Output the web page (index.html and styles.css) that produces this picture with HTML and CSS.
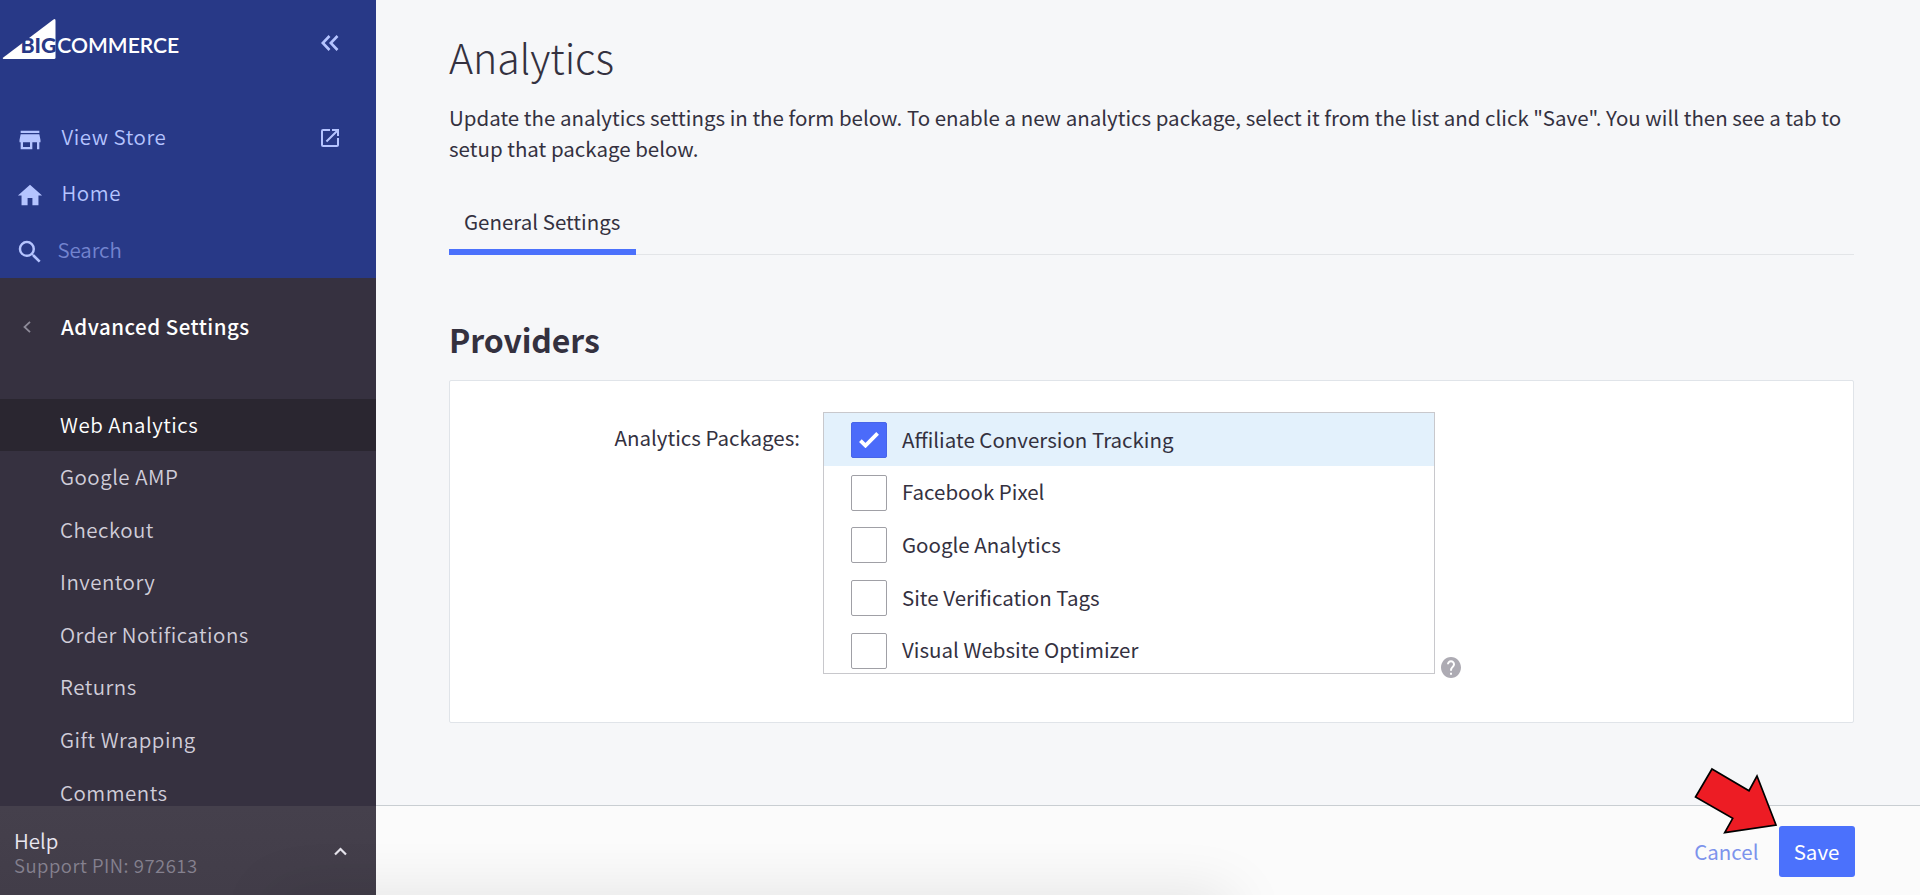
FILE: index.html
```html
<!DOCTYPE html>
<html lang="en">
<head>
<meta charset="utf-8">
<title>Analytics</title>
<link rel="stylesheet" href="styles.css">
</head>
<body>
<div class="app">
  <aside class="sidebar">
    <div class="top">
      <div class="brand">
        <svg class="logo" width="180" height="44" viewBox="0 0 180 44">
          <path fill="#fff" d="M3.5 43Q2 43 3.300 41.500L53.500 3.500Q55.500 2 55.500 4.500V41.500Q55.500 43 54 43Z"/>
          <text class="logo-text logo-big" x="20.500" y="36.500" textLength="36" lengthAdjust="spacingAndGlyphs">BIG</text>
          <text class="logo-text" x="57.300" y="36.500" textLength="122" lengthAdjust="spacingAndGlyphs">COMMERCE</text>
        </svg>
        <svg class="collapse" width="18" height="16" viewBox="0 0 18 16" fill="none" stroke="#b5c4ff" stroke-width="2.600"><path d="M8.500 1L1.800 8l6.700 7M16.500 1L9.800 8l6.700 7"/></svg>
      </div>
      <a class="top-link"><svg class="ico" width="28" height="28" viewBox="0 0 24 24"><path fill="#b5c4ff" d="M20 4H4v2h16V4zm1 10v-2l-1-5H4l-1 5v2h1v6h10v-6h4v6h2v-6h1zm-9 4H6v-4h6v4z"/></svg><span>View Store</span>
        <svg class="ext" width="24" height="24" viewBox="0 0 24 24"><path fill="#b5c4ff" d="M19 19H5V5h7V3H5a2 2 0 0 0-2 2v14a2 2 0 0 0 2 2h14c1.100 0 2-.9 2-2v-7h-2v7zM14 3v2h3.590l-9.830 9.830 1.410 1.410L19 6.410V10h2V3h-7z"/></svg></a>
      <a class="top-link"><svg class="ico" width="29" height="29" viewBox="0 0 24 24"><path fill="#b5c4ff" d="M10 20v-6h4v6h5v-8h3L12 3 2 12h3v8z"/></svg><span>Home</span></a>
      <a class="top-link"><svg class="ico" width="30" height="30" viewBox="0 0 24 24"><path fill="#b5c4ff" d="M15.500 14h-.79l-.28-.27A6.471 6.471 0 0 0 16 9.500 6.500 6.500 0 1 0 9.500 16c1.610 0 3.090-.59 4.230-1.570l.27.28v.79l5 4.990L20.490 19l-4.990-5zm-6 0C7.010 14 5 11.990 5 9.500S7.010 5 9.500 5 14 7.010 14 9.500 11.990 14 9.500 14z"/></svg><span class="search">Search</span></a>
    </div>
    <div class="section"><svg class="back" width="8" height="12" viewBox="0 0 8 12" fill="none" stroke="#8d8a98" stroke-width="1.800"><path d="M7 .8L1.500 6 7 11.200"/></svg><span>Advanced Settings</span></div>
    <nav class="menu">
      <a class="item active">Web Analytics</a>
      <a class="item">Google AMP</a>
      <a class="item">Checkout</a>
      <a class="item">Inventory</a>
      <a class="item">Order Notifications</a>
      <a class="item">Returns</a>
      <a class="item">Gift Wrapping</a>
      <a class="item">Comments</a>
    </nav>
    <div class="help">
      <div><div class="help-title">Help</div><div class="pin">Support PIN: 972613</div></div>
      <svg class="up" width="13" height="9" viewBox="0 0 13 9" fill="none" stroke="#e6e4ec" stroke-width="2.200"><path d="M1 7.500l5.500-5.500 5.500 5.500"/></svg>
    </div>
  </aside>
  <main class="main">
    <div class="content">
      <h1 class="title">Analytics</h1>
      <p class="intro">Update the analytics settings in the form below. To enable a new analytics package, select it from the list and click "Save". You will then see a tab to<br>setup that package below.</p>
      <div class="tabs"><div class="tab">General Settings</div></div>
      <h2 class="heading">Providers</h2>
      <section class="card">
        <div class="label">Analytics Packages:</div>
        <div class="list">
          <div class="option selected"><span class="box checked"><svg width="20" height="16" viewBox="0 0 20 16" fill="none" stroke="#fff" stroke-width="3.800"><path d="M1.400 8.600l5.100 5L18.600 1.400"/></svg></span><span>Affiliate Conversion Tracking</span></div>
          <div class="option"><span class="box"></span><span>Facebook Pixel</span></div>
          <div class="option"><span class="box"></span><span>Google Analytics</span></div>
          <div class="option"><span class="box"></span><span>Site Verification Tags</span></div>
          <div class="option"><span class="box"></span><span>Visual Website Optimizer</span></div>
        </div>
        <svg class="question" width="20" height="21" viewBox="2 2 20 20" preserveAspectRatio="none"><path fill="#adabb3" d="M12 2C6.480 2 2 6.480 2 12s4.480 10 10 10 10-4.480 10-10S17.520 2 12 2zm1 17h-2v-2h2v2zm2.070-7.750l-.9.920C13.450 12.900 13 13.500 13 15h-2v-.5c0-1.100.45-2.100 1.170-2.830l1.240-1.260c.37-.36.59-.86.59-1.410 0-1.100-.9-2-2-2s-2 .9-2 2H8c0-2.210 1.790-4 4-4s4 1.790 4 4c0 .88-.36 1.680-.93 2.250z"/></svg>
      </section>
    </div>
    <footer class="actions">
      <div class="shade"></div>
      <a class="cancel">Cancel</a>
      <button class="save">Save</button>
      <svg class="arrow" width="86" height="70" viewBox="1693 766 86 70"><path fill="#ed1c24" stroke="#000" stroke-width="1.700" d="M1712 769L1749 790.700 1757 776 1776 825 1724.700 832.600 1732.700 818.300 1695.500 797Z"/></svg>
    </footer>
  </main>
</div>
</body>
</html>
```
FILE: styles.css
```css
* { box-sizing: border-box; }
body { margin: 0; font-family: "Noto Sans CJK SC", "Noto Sans", sans-serif; color: #34313f; font-size: 20.500px; }
.app { display: flex; width: 1920px; height: 895px; overflow: hidden; background: #f6f7f9; }
.sidebar { width: 375.500px; height: 895px; display: flex; flex-direction: column; background: #363140; overflow: hidden; white-space: nowrap; }
.top { height: 278px; flex: none; background: #283987; }
.brand { height: 110px; display: flex; justify-content: space-between; padding: 16px 37px 0 0; }
.collapse { margin-top: 19px; }
.logo-text { font: 600 20.500px Lato, sans-serif; fill: #fff; }
.logo-big { fill: #283987; font-weight: 900; }
.top-link { display: flex; align-items: center; height: 56px; color: #b5c4ff; font-weight: 350; letter-spacing: .55px; padding-right: 34px; line-height: 52px; }
.top-link span { height: 56px; }
.ico { flex: none; width: 30px; margin: 3px 16.500px 0 15px; }
.ext { margin-left: auto; }
.search { color: #7384cf; margin-left: -4px; letter-spacing: -.1px; line-height: 54px; }
.section { height: 120.500px; flex: none; display: flex; align-items: flex-start; padding: 31px 0 0 23px; line-height: 35px; color: #fff; font-weight: 500; letter-spacing: .5px; }
.back { margin: 12px 30px 0 0; }
.menu { height: 407.500px; flex: none; overflow: hidden; }
.item { display: block; height: 52.600px; line-height: 50.500px; padding-left: 60px; color: #d0cdd9; font-weight: 350; letter-spacing: .5px; }
.active { background: #2a2630; color: #fff; }
.help { height: 89px; flex: none; background: linear-gradient(#45404c, #423d49); display: flex; justify-content: space-between; padding: 21px 29px 0 14px; color: #e9e7ef; font-weight: 350; }
.help-title { line-height: 26px; }
.pin { line-height: 24px; font-size: 18.500px; color: #85818f; letter-spacing: .5px; }
.up { margin-top: 20px; }
.main { width: 1544.500px; height: 895px; display: flex; flex-direction: column; }
.content { height: 805px; padding: 30px 66px 0 73.500px; }
.title { margin: 0; font-size: 41px; letter-spacing: -.1px; font-weight: 200; line-height: 52px; }
.intro { margin: 20px 0 0; line-height: 30.500px; white-space: nowrap; }
.tabs { height: 70px; margin-top: 22px; border-bottom: 1px solid #e3e5e8; display: flex; }
.tab { height: 70px; width: 187px; border-bottom: 6px solid #4b71fc; padding-left: 15px; padding-top: 18px; line-height: 36px; white-space: nowrap; }
.heading { margin: 62px 0 0; font-size: 32px; line-height: 44px; font-weight: 700; letter-spacing: -.1px; }
.card { margin-top: 19px; height: 343px; background: #fff; border: 1px solid #e0e4e9; border-radius: 2px; display: flex; align-items: flex-start; padding-top: 31px; white-space: nowrap; }
.label { width: 350px; text-align: right; line-height: 51px; }
.list { margin-left: 23px; width: 611.500px; height: 262px; border: 1px solid #c8c8cc; }
.option { display: flex; align-items: center; height: 52.700px; gap: 15px; padding-left: 27px; line-height: 51.500px; }
.selected { background: #e3f1fc; }
.box { width: 36px; height: 36px; border: 1px solid #a0a0a6; border-radius: 2px; margin-top: 1px; display: flex; align-items: center; justify-content: center; }
.checked { background: #4b6bfa; border-color: #4865e8; }
.question { margin: 245px 0 0 6px; }
.actions { height: 90px; border-top: 1px solid #c9ced2; background: #fbfbfb; display: flex; justify-content: flex-end; align-items: flex-start; padding: 20px 65.500px 0 0; position: relative; }
.shade { position: absolute; left: -100px; top: 92px; width: 955px; height: 40px; box-shadow: 0 0 60px rgba(0,0,0,.13); }
.cancel { line-height: 51px; color: #7c93ec; margin-right: 20px; position: relative; }
.save { width: 76px; height: 51px; border: 0; border-radius: 3px; background: #4b71fc; color: #fff; font: 400 20.500px/51px "Noto Sans CJK SC", sans-serif; padding: 0; position: relative; }
.arrow { position: absolute; left: 1317.500px; top: -40px; }
```
